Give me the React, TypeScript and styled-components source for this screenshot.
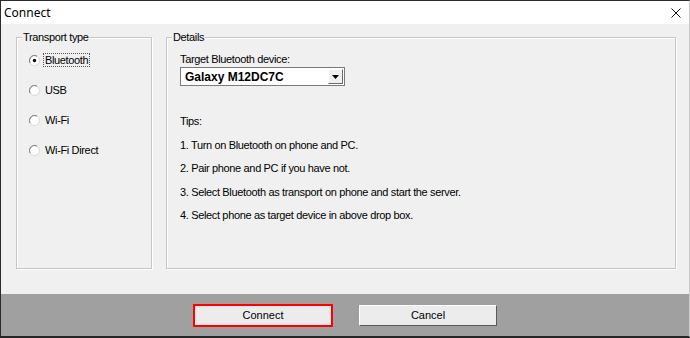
import styled, { createGlobalStyle } from "styled-components";

const GlobalStyle = createGlobalStyle`
  html, body {
    margin: 0;
    padding: 0;
    background: #f0f0f0;
  }
  * {
    box-sizing: border-box;
  }
`;

const Window = styled.div`
  width: 690px;
  height: 338px;
  display: flex;
  flex-direction: column;
  border-top: 1px solid #2a2a2a;
  border-left: 1px solid #2a2a2a;
  border-right: 1px solid #c8c8c8;
  border-bottom: 2px solid #262626;
  font-family: "Liberation Sans", Arial, sans-serif;
  font-size: 11px;
  letter-spacing: -0.35px;
  color: #000;
  overflow: hidden;
`;

const TitleBar = styled.div`
  height: 23px;
  flex: none;
  background: #fff;
  display: flex;
  align-items: center;
  justify-content: space-between;
  padding: 0 8px 0 3px;
  font-family: "Noto Sans", "Open Sans", sans-serif;
  font-size: 12px;
  letter-spacing: 0;
`;

const Body = styled.div`
  flex: 1;
  display: flex;
  gap: 14px;
  padding: 7px 13px 25px 15px;
  background: #f0f0f0;
`;

const Group = styled.fieldset<{ $width: number }>`
  width: ${(p) => p.$width}px;
  flex: none;
  margin: 0;
  padding: 0 13px;
  border: 1px solid #c6c6c6;
  box-shadow: inset 1px 1px 0 #fff, 1px 1px 0 #fff;
  display: flex;
  flex-direction: column;
`;

const Legend = styled.legend`
  margin-left: -8px;
  padding: 0 1px;
  line-height: 12px;
  background: #f0f0f0;
`;

const RadioList = styled.div`
  display: flex;
  flex-direction: column;
  gap: 16px;
  padding-top: 10px;
`;

const RadioRow = styled.label`
  display: flex;
  align-items: center;
  height: 14px;
  gap: 3px;
  margin-left: -1px;
`;

const RadioText = styled.span<{ $focus?: boolean }>`
  padding: 0 1px;
  line-height: 12px;
  border: 1px ${(p) => (p.$focus ? "dotted #555" : "solid transparent")};
`;

const FieldLabel = styled.div`
  margin-top: 10px;
  line-height: 13px;
`;

const Combo = styled.div`
  margin-top: 1px;
  width: 165px;
  height: 19px;
  border: 1px solid #7a7a7a;
  background: #fff;
  display: flex;
  align-items: center;
  padding: 0 1px 0 4px;
`;

const ComboText = styled.span`
  flex: 1;
  font-weight: bold;
  font-size: 12px;
  letter-spacing: 0;
`;

const ComboButton = styled.span`
  width: 15px;
  height: 15px;
  background: #f0f0f0;
  border: 1px solid;
  border-color: #fff #696969 #696969 #fff;
  display: flex;
  align-items: center;
  justify-content: center;
`;

const Tips = styled.div`
  margin-top: 29px;
  display: flex;
  flex-direction: column;
  gap: 10.5px;
  line-height: 13px;
`;

const Footer = styled.div`
  height: 42px;
  flex: none;
  background: #a0a0a0;
  display: flex;
  justify-content: center;
  gap: 26px;
  padding-top: 10px;
`;

const Button = styled.button<{ $default?: boolean }>`
  width: ${(p) => (p.$default ? 140 : 138)}px;
  height: ${(p) => (p.$default ? 23 : 21)}px;
  margin-top: ${(p) => (p.$default ? 0 : 1)}px;
  font: inherit;
  font-size: 11px;
  line-height: 12px;
  color: #000;
  background: #ececec;
  border: 1px solid;
  border-color: #fff #5a5a5a #5a5a5a #fff;
  outline: ${(p) => (p.$default ? "2px solid #ff0000" : "none")};
  outline-offset: -2px;
  box-shadow: ${(p) => (p.$default ? "inset 0 0 0 3px #e8e8e8" : "none")};
  padding: 0 0 2px;
`;

const Radio = ({ checked }: { checked?: boolean }) => (
  <svg width="11" height="11" viewBox="0 0 11 11">
    <circle cx="5.5" cy="5.5" r="5" fill="#fff" stroke="#d8d8d8" strokeWidth="1" />
    <path d="M1.2 8 A5 5 0 0 1 8 1.2" fill="none" stroke="#8a8a8a" strokeWidth="1.1" />
    {checked && <circle cx="5.5" cy="5.5" r="1.7" fill="#000" />}
  </svg>
);

const transports = ["Bluetooth", "USB", "Wi-Fi", "Wi-Fi Direct"];

const tips = [
  "1. Turn on Bluetooth on phone and PC.",
  "2. Pair phone and PC if you have not.",
  "3. Select Bluetooth as transport on phone and start the server.",
  "4. Select phone as target device in above drop box.",
];

export default function App() {
  return (
    <>
      <GlobalStyle />
      <Window>
        <TitleBar>
          <span>Connect</span>
          <svg width="10" height="10" viewBox="0 0 10 10">
            <path d="M0.5 0.5 L9.5 9.5 M9.5 0.5 L0.5 9.5" stroke="#111" strokeWidth="1" />
          </svg>
        </TitleBar>
        <Body>
          <Group $width={136}>
            <Legend>Transport type</Legend>
            <RadioList>
              {transports.map((t, i) => (
                <RadioRow key={t}>
                  <Radio checked={i === 0} />
                  <RadioText $focus={i === 0}>{t}</RadioText>
                </RadioRow>
              ))}
            </RadioList>
          </Group>
          <Group $width={510}>
            <Legend>Details</Legend>
            <FieldLabel>Target Bluetooth device:</FieldLabel>
            <Combo>
              <ComboText>Galaxy M12DC7C</ComboText>
              <ComboButton>
                <svg width="7" height="4" viewBox="0 0 7 4">
                  <path d="M0 0 H7 L3.5 4 Z" fill="#000" />
                </svg>
              </ComboButton>
            </Combo>
            <Tips>
              <div>Tips:</div>
              {tips.map((t) => (
                <div key={t}>{t}</div>
              ))}
            </Tips>
          </Group>
        </Body>
        <Footer>
          <Button $default>Connect</Button>
          <Button>Cancel</Button>
        </Footer>
      </Window>
    </>
  );
}
